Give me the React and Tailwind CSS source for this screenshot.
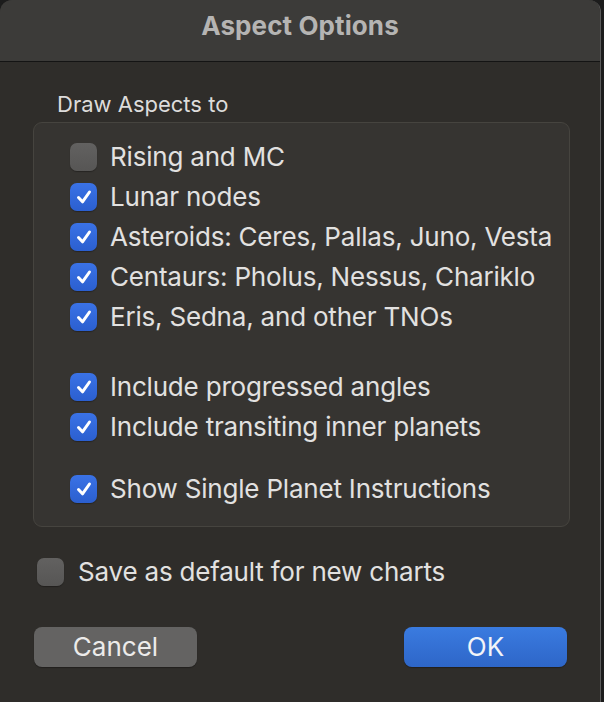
import React from "react";

const font = { fontFamily: "Inter, 'Noto Sans', 'Liberation Sans', sans-serif" };

function Check({ checked }) {
  if (checked) {
    return (
      <div className="w-[27px] h-[28px] rounded-[7px] bg-gradient-to-b from-[#3a72e6] to-[#2b5fcf] flex items-center justify-center shrink-0 shadow-[0_1px_1px_rgba(0,0,0,0.3)]">
        <svg width="18" height="18" viewBox="0 0 18 18">
          <path d="M3.5 9.5 L7.5 13.8 L14.5 4" fill="none" stroke="#ffffff" strokeWidth="3" strokeLinecap="round" strokeLinejoin="round" />
        </svg>
      </div>
    );
  }
  return (
    <div className="w-[27px] h-[28px] rounded-[7px] bg-gradient-to-b from-[#626160] to-[#575655] shrink-0 shadow-[0_1px_1px_rgba(0,0,0,0.3)]" />
  );
}

function Row({ checked, label }) {
  return (
    <div className="h-10 flex items-center gap-[13px]">
      <Check checked={checked} />
      <span className="text-[26px] text-[#e2e1e0] leading-none tracking-[-0.2px]">{label}</span>
    </div>
  );
}

export default function App() {
  return (
    <div className="w-[604px] h-[702px] bg-[#1c1c1c] overflow-hidden" style={font}>
      <div className="w-[601px] h-[720px] rounded-[12px] bg-[#2f2d2a] border-r border-[#5a5a5a] overflow-hidden flex flex-col">
        <div className="h-[62px] bg-[#3c3b39] border-b border-[#141414] flex items-center justify-center shrink-0 pb-[10px]">
          <span className="text-[26px] font-bold text-[#b5b4b3] tracking-[0.1px] leading-none">Aspect Options</span>
        </div>
        <div className="pl-[33px] pr-[30px] flex flex-col">
          <div className="h-[60px] flex items-end pl-[24px] pb-[7px]">
            <span className="text-[22px] text-[#dddcdb] leading-none">Draw Aspects to</span>
          </div>
          <div className="w-[537px] h-[405px] rounded-[9px] border border-[#46443f] bg-[#363431] pt-[14px] pl-[36px] flex flex-col">
            <Row checked={false} label="Rising and MC" />
            <Row checked label="Lunar nodes" />
            <Row checked label="Asteroids: Ceres, Pallas, Juno, Vesta" />
            <Row checked label="Centaurs: Pholus, Nessus, Chariklo" />
            <Row checked label="Eris, Sedna, and other TNOs" />
            <div className="h-[30px]" />
            <Row checked label="Include progressed angles" />
            <Row checked label="Include transiting inner planets" />
            <div className="h-[22px]" />
            <Row checked label="Show Single Planet Instructions" />
          </div>
          <div className="mt-[25px] h-10 flex items-center gap-[14px] pl-[4px]">
            <Check checked={false} />
            <span className="text-[26px] text-[#e2e1e0] leading-none tracking-[-0.2px]">Save as default for new charts</span>
          </div>
          <div className="mt-[35px] flex justify-between pl-[1px] pr-[3px]">
            <div className="w-[163px] h-[40px] rounded-[8px] bg-[#646362] flex items-center justify-center shadow-[0_1px_1px_rgba(0,0,0,0.3)]">
              <span className="text-[26px] text-[#ecebea] leading-none">Cancel</span>
            </div>
            <div className="w-[163px] h-[40px] rounded-[8px] bg-gradient-to-b from-[#3a7be0] to-[#2e66c8] flex items-center justify-center shadow-[0_1px_1px_rgba(0,0,0,0.3)]">
              <span className="text-[26px] text-[#f2f4f8] leading-none">OK</span>
            </div>
          </div>
        </div>
      </div>
    </div>
  );
}
